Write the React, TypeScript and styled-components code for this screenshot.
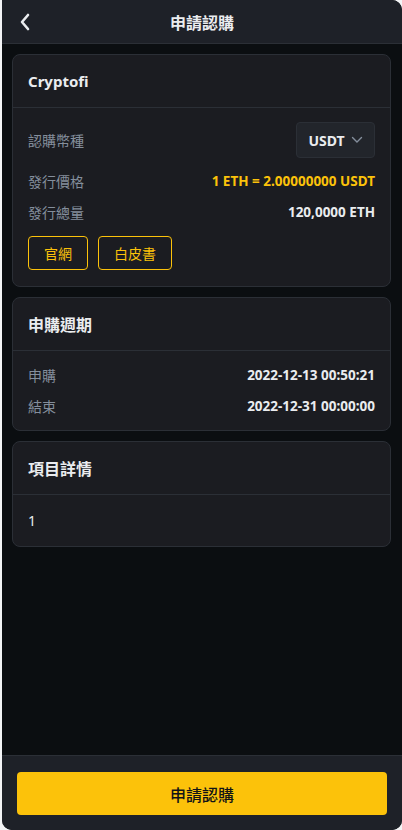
import React from "react";
import styled, { createGlobalStyle } from "styled-components";

const Global = createGlobalStyle`
  html, body { margin: 0; padding: 0; background: #f3f4f6; }
  body { font-family: "Noto Sans", "Noto Sans CJK TC", sans-serif; }
  * { box-sizing: border-box; }
`;

const Frame = styled.div`
  margin-left: 2px;
  width: 400px;
  height: 830px;
  background: #0b0e11;
  border-radius: 0 10px 10px 10px;
  overflow: hidden;
  display: flex;
  flex-direction: column;
  font-family: "Noto Sans", "Noto Sans CJK TC", sans-serif;
`;

const TopBar = styled.header`
  height: 44px;
  flex: none;
  background: #1e2128;
  border-bottom: 1px solid #2b2f36;
  display: flex;
  align-items: center;
  justify-content: center;
  position: relative;
`;

const BackBtn = styled.button`
  position: absolute;
  left: 12px;
  top: 11px;
  width: 22px;
  height: 22px;
  padding: 0;
  border: 0;
  background: transparent;
  display: flex;
  align-items: center;
  justify-content: center;
`;

const Title = styled.h1`
  margin: 0;
  font-size: 16px;
  font-weight: 700;
  color: #eaecef;
`;

const Content = styled.main`
  flex: 1;
  padding: 10px 11px 10px 10px;
  display: flex;
  flex-direction: column;
  gap: 10px;
`;

const Card = styled.section`
  background: #1b1c21;
  border: 1px solid #2b2f36;
  border-radius: 8px;
`;

const CardHead = styled.div<{ $big?: boolean }>`
  height: 53px;
  padding: 0 15px;
  display: flex;
  align-items: center;
  border-bottom: 1px solid #2b2f36;
  font-size: ${(p) => (p.$big ? "16px" : "15px")};
  font-weight: 700;
  color: #eaecef;
`;

const CardBody = styled.div<{ $pt: number; $pb: number }>`
  padding: ${(p) => p.$pt}px 15px ${(p) => p.$pb}px 15px;
  display: flex;
  flex-direction: column;
  gap: 11px;
`;

const Row = styled.div<{ $h?: number }>`
  height: ${(p) => p.$h ?? 20}px;
  display: flex;
  align-items: center;
  justify-content: space-between;
`;

const Label = styled.span`
  font-size: 14px;
  color: #848e9c;
`;

const Value = styled.span<{ $accent?: boolean }>`
  font-size: 13.5px;
  font-weight: 700;
  color: ${(p) => (p.$accent ? "#fcc20a" : "#eaecef")};
`;

const Select = styled.div`
  width: 79px;
  height: 36px;
  background: #22252b;
  border: 1px solid #2b2f36;
  border-radius: 4px;
  display: flex;
  align-items: center;
  justify-content: center;
  gap: 6px;
  font-size: 14px;
  font-weight: 700;
  color: #eaecef;
`;

const Links = styled.div`
  display: flex;
  gap: 10px;
  margin-top: 3px;
`;

const LinkBtn = styled.button`
  height: 34px;
  padding: 0 15px;
  background: transparent;
  border: 1px solid #fcc20a;
  border-radius: 4px;
  color: #fcc20a;
  font-family: inherit;
  font-size: 14px;
`;

const Text = styled.div`
  font-size: 14px;
  color: #eaecef;
`;

const Footer = styled.footer`
  flex: none;
  height: 75px;
  background: #1e2128;
  border-top: 1px solid #2b2f36;
  padding: 16px 15px 0 15px;
`;

const Submit = styled.button`
  width: 100%;
  height: 43px;
  border: 0;
  border-radius: 4px;
  background: #fcc20a;
  color: #111317;
  font-family: inherit;
  font-size: 16px;
  font-weight: 500;
`;

export default function App() {
  return (
    <>
      <Global />
      <Frame>
        <TopBar>
          <BackBtn aria-label="back">
            <svg width="14" height="18" viewBox="0 0 14 18">
              <path d="M10 2 L4 9 L10 16" fill="none" stroke="#eaecef" strokeWidth="2.6" strokeLinecap="round" strokeLinejoin="round" />
            </svg>
          </BackBtn>
          <Title>申請認購</Title>
        </TopBar>
        <Content>
          <Card>
            <CardHead>Cryptofi</CardHead>
            <CardBody $pt={14} $pb={16}>
              <Row $h={36} style={{ marginBottom: 2 }}>
                <Label>認購幣種</Label>
                <Select>
                  USDT
                  <svg width="12" height="8" viewBox="0 0 12 8">
                    <path d="M1.5 1.5 L6 6 L10.5 1.5" fill="none" stroke="#848e9c" strokeWidth="1.4" strokeLinecap="round" />
                  </svg>
                </Select>
              </Row>
              <Row>
                <Label>發行價格</Label>
                <Value $accent>1 ETH = 2.00000000 USDT</Value>
              </Row>
              <Row>
                <Label>發行總量</Label>
                <Value>120,0000 ETH</Value>
              </Row>
              <Links>
                <LinkBtn>官網</LinkBtn>
                <LinkBtn>白皮書</LinkBtn>
              </Links>
            </CardBody>
          </Card>
          <Card>
            <CardHead $big>申購週期</CardHead>
            <CardBody $pt={14} $pb={14}>
              <Row>
                <Label>申購</Label>
                <Value>2022-12-13 00:50:21</Value>
              </Row>
              <Row>
                <Label>結束</Label>
                <Value>2022-12-31 00:00:00</Value>
              </Row>
            </CardBody>
          </Card>
          <Card>
            <CardHead $big>項目詳情</CardHead>
            <CardBody $pt={15} $pb={16}>
              <Row>
                <Text>1</Text>
              </Row>
            </CardBody>
          </Card>
        </Content>
        <Footer>
          <Submit>申請認購</Submit>
        </Footer>
      </Frame>
    </>
  );
}
